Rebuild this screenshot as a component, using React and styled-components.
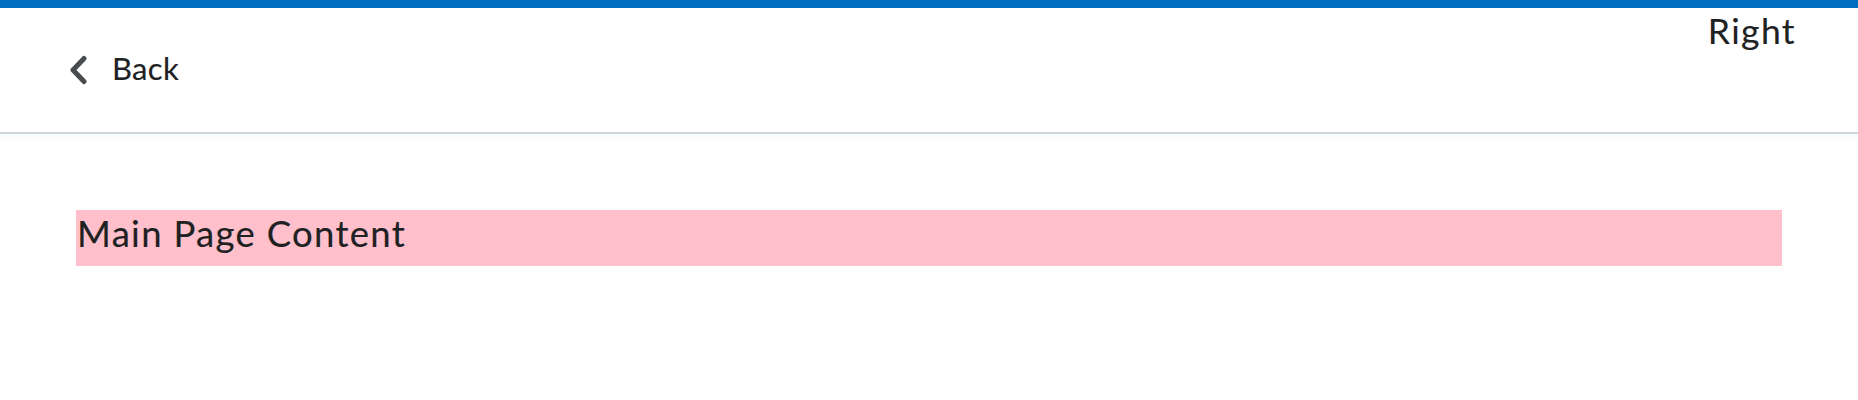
import React from 'react'
import styled, { createGlobalStyle } from 'styled-components'

const GlobalStyle = createGlobalStyle`
  html, body {
    margin: 0;
    padding: 0;
    background: #ffffff;
    font-family: Lato, "Noto Sans", sans-serif;
    color: #202122;
  }
`

const Page = styled.div`
  display: flex;
  flex-direction: column;
  min-height: 400px;
`

const Header = styled.header`
  display: flex;
  justify-content: space-between;
  align-items: stretch;
  height: 124px;
  border-top: 8px solid #006fbf;
  border-bottom: 2px solid #cdd5dc;
  box-shadow: 0 4px 6px rgba(205, 213, 220, 0.15);
`

const BackLink = styled.a`
  display: flex;
  align-items: center;
  gap: 25px;
  padding-left: 69px;
  font-size: 31px;
  letter-spacing: 0.3px;
  -webkit-text-stroke: 0.12px #202122;
  color: #202122;
  text-decoration: none;
  cursor: pointer;
`

const BackLabel = styled.span`
  margin-bottom: 5px;
`

const Chevron = styled.svg`
  width: 18px;
  height: 30px;
  display: block;
`

const RightSlot = styled.div`
  padding: 2px 62px 0 0;
  font-size: 35.5px;
  line-height: 42px;
  letter-spacing: 1.4px;
  -webkit-text-stroke: 0.12px #202122;
  color: #202122;
`

const Main = styled.main`
  padding: 76px;
`

const Content = styled.div`
  background: pink;
  font-size: 36.5px;
  line-height: 46px;
  padding: 0 0 10px 1px;
  letter-spacing: 1.3px;
  -webkit-text-stroke: 0.15px #202122;
`

export default function App() {
  return (
    <>
      <GlobalStyle />
      <Page>
        <Header>
          <BackLink>
            <Chevron viewBox="0 0 18 30">
              <path
                d="M15 3.5 L4 15 L15 26.5"
                fill="none"
                stroke="#494c4e"
                strokeWidth="5"
                strokeLinecap="round"
                strokeLinejoin="round"
              />
            </Chevron>
            <BackLabel>Back</BackLabel>
          </BackLink>
          <RightSlot>Right</RightSlot>
        </Header>
        <Main>
          <Content>Main Page Content</Content>
        </Main>
      </Page>
    </>
  )
}
